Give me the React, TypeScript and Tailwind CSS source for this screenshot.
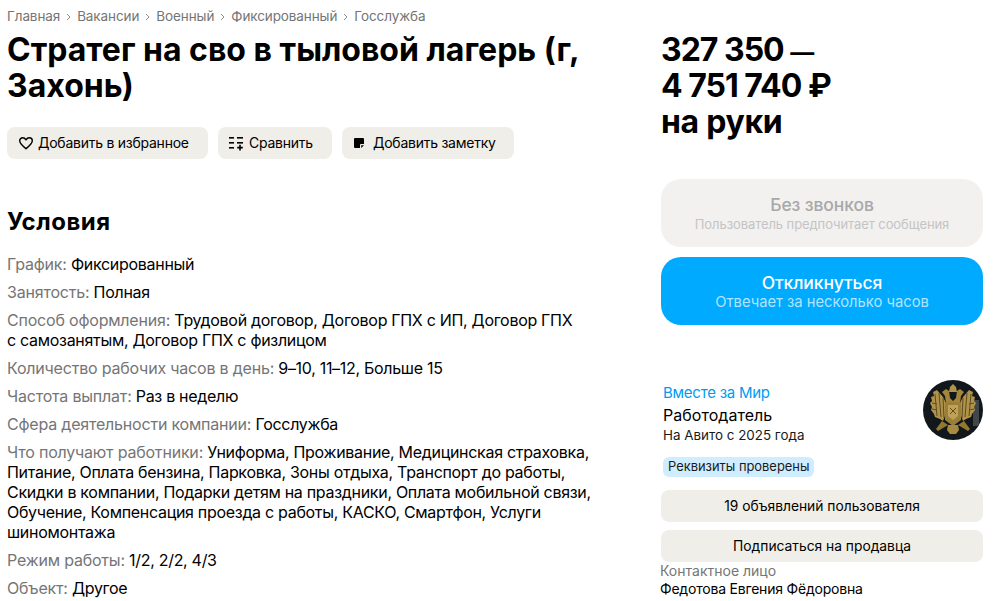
import React from "react";

const font = { fontFamily: "Inter, 'Noto Sans', sans-serif" };

function Row({ label, children }: { label: string; children: React.ReactNode }) {
  return (
    <p className="text-[16px] leading-[20px] tracking-[-0.3px] text-black">
      <span className="text-[#757575] tracking-[-0.2px]">{label}:</span> {children}
    </p>
  );
}

function Chevron() {
  return (
    <svg width="5" height="8" viewBox="0 0 5 8" fill="none" className="mx-[6px] mt-[1px]">
      <path d="M1 1l3 3-3 3" stroke="#8f8f8f" strokeWidth="1" />
    </svg>
  );
}

function Emblem() {
  return (
    <svg width="60" height="60" viewBox="0 0 60 60" className="blur-[0.5px]">
      <defs>
        <clipPath id="c"><circle cx="30" cy="30" r="30" /></clipPath>
      </defs>
      <g clipPath="url(#c)">
        <rect width="60" height="60" fill="#12171c" />
        <rect x="50" y="20" width="6" height="26" fill="#40464a" />
        <path d="M27 7l3-3 3 3 1 5h-8z" fill="#b2934a" />
        <path d="M19 12l4-3 3 2 1 7 3 3 3-3 1-7 3-2 4 3-3 4-1 8H23l-1-8z" fill="#a48639" />
        <path d="M20 17l-6-7-4 2 1 4-3 1 1 4-2 2 2 4-1 3 3 4 1 3 5 2 3 2 3-8-1-12z" fill="#b0934a" />
        <path d="M40 17l6-7 4 2-1 4 3 1-1 4 2 2-2 4 1 3-3 4-1 3-5 2-3 2-3-8 1-12z" fill="#b0934a" />
        <path d="M22 22h16v18l-8 6-8-6z" fill="#9a7f3a" />
        <path d="M25 25h10v11l-5 4-5-4z" fill="#bfa257" />
        <path d="M19 41l6 4-5 3-5 3-2-2zM41 41l-6 4 5 3 5 3 2-2z" fill="#93782f" />
        <path d="M25 45h10l1 5-3 4h-6l-3-4z" fill="#a68a3e" />
        <path d="M12 14l2 22M16 13l2 24M20 18l1 20M48 14l-2 22M44 13l-2 24M40 18l-1 20M9 23l5 1M9 29l5 1M51 23l-5 1M51 29l-5 1M27 28l6 6M33 28l-6 6" stroke="#5f4c1e" strokeWidth="1" />
      </g>
    </svg>
  );
}

function ActionButton({ icon, text, className }: { icon: React.ReactNode; text: string; className: string }) {
  return (
    <button className={`h-8 rounded-[8px] bg-[#f0eee8] flex items-center pb-[1px] text-[14px] tracking-[-0.25px] text-black ${className}`}>
      {icon}
      {text}
    </button>
  );
}

export default function App() {
  const crumbs = ["Главная", "Вакансии", "Военный", "Фиксированный", "Госслужба"];
  return (
    <div style={font} className="w-[1001px] h-[601px] overflow-hidden bg-white flex pl-[7px] text-black">
      <div className="w-[654px] shrink-0 pt-[8px]">
        <div className="flex items-center h-[16px] text-[13.5px] text-[#757575] tracking-[-0.1px]">
          {crumbs.map((c, i) => (
            <React.Fragment key={c}>
              {i > 0 && <Chevron />}
              <span>{c}</span>
            </React.Fragment>
          ))}
        </div>
        <h1 className="mt-[8px] text-[32px] leading-[36px] font-bold tracking-normal">
          Стратег на сво в тыловой лагерь (г,
          <br />
          Захонь)
        </h1>
        <div className="mt-[23px] flex gap-[10px]">
          <ActionButton
            className="w-[201px] pl-[11px] gap-[4px]"
            text="Добавить в избранное"
            icon={
              <svg width="16" height="16" viewBox="0 0 16 16" fill="none">
                <path d="M8 13.700C4.500 10.900 1.700 8.700 1.700 5.800 1.700 4 3.100 2.800 4.700 2.800c1.300 0 2.500.7 3.300 2 .8-1.300 2-2 3.300-2 1.600 0 3 1.200 3 3 0 2.900-2.800 5.100-6.300 7.900z" stroke="#000" strokeWidth="1.400" strokeLinejoin="round" />
              </svg>
            }
          />
          <ActionButton
            className="w-[114px] pl-[10px] gap-[5px]"
            text="Сравнить"
            icon={
              <svg width="16" height="16" viewBox="0 0 16 16" fill="#000">
                <rect x="1" y="2" width="5" height="1.600" />
                <rect x="9" y="2" width="6" height="1.600" />
                <rect x="1" y="7" width="5" height="1.600" />
                <rect x="9" y="7" width="6" height="1.600" />
                <rect x="1" y="12" width="5" height="1.600" />
                <path d="M11.200 9.800h1.600v2h2v1.600h-2v2h-1.600v-2h-2v-1.600h2z" />
              </svg>
            }
          />
          <ActionButton
            className="w-[172px] pl-[11px] gap-[8px]"
            text="Добавить заметку"
            icon={
              <svg width="12" height="12" viewBox="0 0 12 12" fill="#000">
                <path d="M2 1h8a1 1 0 0 1 1 1v5H8a1 1 0 0 0-1 1v3H2a1 1 0 0 1-1-1V2a1 1 0 0 1 1-1z" />
                <path d="M8.200 8.200H11L8.200 11z" />
              </svg>
            }
          />
        </div>
        <h2 className="mt-[47px] text-[24px] leading-[32px] font-bold tracking-[0.5px]">Условия</h2>
        <div className="mt-[16px] flex flex-col gap-[8px]">
          <Row label="График">Фиксированный</Row>
          <Row label="Занятость">Полная</Row>
          <Row label="Способ оформления">
            Трудовой договор, Договор ГПХ с ИП, Договор ГПХ
            <br />с самозанятым, Договор ГПХ с физлицом
          </Row>
          <Row label="Количество рабочих часов в день">9–10, 11–12, Больше 15</Row>
          <Row label="Частота выплат">Раз в неделю</Row>
          <Row label="Сфера деятельности компании">Госслужба</Row>
          <Row label="Что получают работники">
            Униформа, Проживание, Медицинская страховка,
            <br />
            Питание, Оплата бензина, Парковка, Зоны отдыха, Транспорт до работы,
            <br />
            Скидки в компании, Подарки детям на праздники, Оплата мобильной связи,
            <br />
            Обучение, Компенсация проезда с работы, КАСКО, Смартфон, Услуги
            <br />
            шиномонтажа
          </Row>
          <Row label="Режим работы">1/2, 2/2, 4/3</Row>
          <Row label="Объект">Другое</Row>
        </div>
      </div>

      <div className="w-[322px] shrink-0 pt-[32px]">
        <div className="text-[32px] leading-[36px] font-bold tracking-[-1px]">
          327 350 <span className="text-[24px] leading-[0]">—</span>
          <br />4 751 740 ₽
          <br />
          <span className="tracking-[-0.3px]">на руки</span>
        </div>
        <div className="mt-[39px] h-[68px] rounded-[20px] bg-[#f2f1f0] flex flex-col items-center justify-center">
          <span className="text-[17.5px] leading-[22px] font-medium text-[#a8a8a8] tracking-[-0.1px]">Без звонков</span>
          <span className="text-[13px] leading-[16px] tracking-[-0.08px] text-[#c4c4c4]">Пользователь предпочитает сообщения</span>
        </div>
        <div className="mt-[10px] h-[68px] rounded-[20px] bg-[#00aaff] flex flex-col items-center justify-center">
          <span className="text-[17.5px] leading-[22px] mt-[-1px] font-medium text-white tracking-[-0.1px]">Откликнуться</span>
          <span className="text-[14.75px] leading-[16px] text-[#b0e4ff]">Отвечает за несколько часов</span>
        </div>
        <div className="mt-[58px] flex justify-between pl-[2px]">
          <div className="flex flex-col">
            <span className="text-[15px] leading-[20px] tracking-[-0.25px] text-[#009cf0]">Вместе за Мир</span>
            <span className="mt-[2px] text-[16px] leading-[20px] tracking-[0.05px]">Работодатель</span>
            <span className="mt-[0px] text-[13.4px] leading-[20px] text-[#1a1a1a]">На Авито с 2025 года</span>
            <span className="mt-[12px] self-start h-[20px] px-[5px] rounded-[6px] bg-[#cfedff] text-[12.9px] leading-[20px] text-[#1a1a1a]">
              Реквизиты проверены
            </span>
          </div>
          <div className="mt-[-3px]"><Emblem /></div>
        </div>
        <div className="mt-[13px] h-[32px] rounded-[8px] bg-[#f0eee8] flex items-center justify-center text-[13.8px]">
          19 объявлений пользователя
        </div>
        <div className="mt-[8px] h-[32px] rounded-[8px] bg-[#f0eee8] flex items-center justify-center text-[13.8px]">
          Подписаться на продавца
        </div>
        <div className="text-[14px] leading-[18px] text-[#757575] ml-[-1px]">Контактное лицо</div>
        <div className="mt-[-1px] text-[14px] leading-[20px] tracking-[-0.2px] ml-[-1px]">Федотова Евгения Фёдоровна</div>
      </div>
    </div>
  );
}
